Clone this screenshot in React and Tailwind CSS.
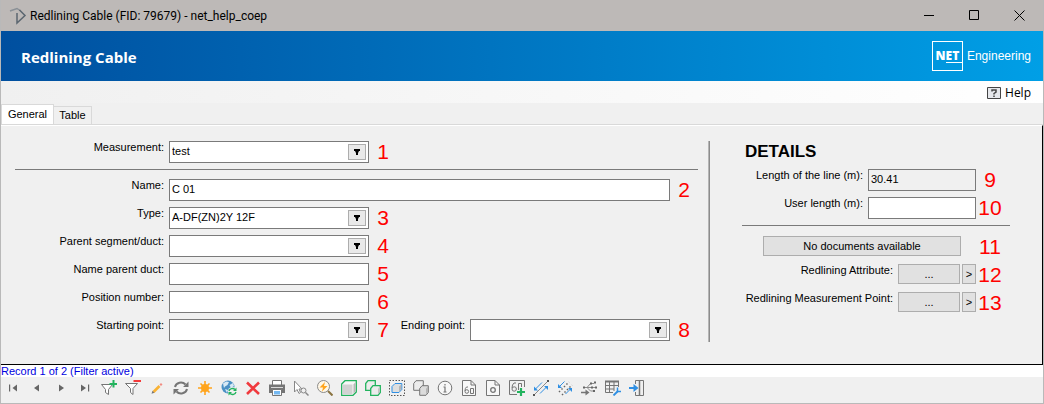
import React from "react";

const typeOptions = ["A-DF(ZN)2Y 12F"];

const Marker = ({ children }) => (
  <span className="w-7 shrink-0 text-center text-[21px] leading-[22px] text-[#ff0000]">
    {children}
  </span>
);

const Label = ({ htmlFor, className = "", children }) => (
  <label
    htmlFor={htmlFor}
    className={`shrink-0 whitespace-nowrap text-right leading-3 ${className}`}
  >
    {children}
  </label>
);

const TextField = ({ className = "", readOnly, ...props }) => (
  <input
    type="text"
    readOnly={readOnly}
    className={`h-[22px] min-w-0 border border-[#7a7a7a] px-0.5 pb-0.5 text-[11px] text-black outline-none ${
      readOnly ? "bg-[#f0f0f0]" : "bg-white"
    } ${className}`}
    {...props}
  />
);

const SelectField = ({ id, options = [""] }) => (
  <div className="relative h-[22px] w-[200px] shrink-0">
    <select
      id={id}
      className="h-full w-full appearance-none border border-[#7a7a7a] bg-white px-0.5 pb-0.5 text-[11px] text-black outline-none"
    >
      {options.map((option) => (
        <option key={option}>{option}</option>
      ))}
    </select>
    <span className="pointer-events-none absolute right-[3px] top-[3px] flex h-4 w-[18px] items-center justify-center border border-[#adadad] bg-[#e9e9e9]">
      <svg width="6" height="6" viewBox="0 0 6 6">
        <path d="M0 0H6V2H5L4 4V6H2V4L1 2H0Z" fill="#000" />
      </svg>
    </span>
  </div>
);

const PushButton = ({ className = "", ...props }) => (
  <button
    type="button"
    className={`h-5 shrink-0 border border-[#adadad] bg-[#e1e1e1] text-center leading-4 ${className}`}
    {...props}
  />
);

const GRAY = "#757575";
const BLUE = "#2f8fe3";
const GREEN = "#22b35e";

/* 16x16 drawings of the record toolbar, in order */
const tools = [
  {
    name: "First record",
    icon: (
      <g fill="#666">
        <path d="M4 4.500H5.200V11.500H4Z" />
        <path d="M12 4.500V11.500L7.500 8Z" />
      </g>
    ),
  },
  { name: "Previous record", icon: <path d="M10 4.500V11.500L5 8Z" fill="#666" /> },
  { name: "Next record", icon: <path d="M6 4.500V11.500L11 8Z" fill="#666" /> },
  {
    name: "Last record",
    icon: (
      <g fill="#666">
        <path d="M4 4.500V11.500L9 8Z" />
        <path d="M11 4.500H12.200V11.500H11Z" />
      </g>
    ),
  },
  {
    name: "Add filter",
    icon: (
      <>
        <path d="M.5 4.500H11.500L7.500 9.500V14.500L4.500 12.500V9.500Z" fill="#fff" stroke={GRAY} />
        <path d="M12.500 0V7.500M8.500 4H16" stroke={GREEN} strokeWidth="2" />
      </>
    ),
  },
  {
    name: "Remove filter",
    icon: (
      <>
        <path d="M.5 3.500H12.500L8 8.500V14.500L5.500 12.500V8.500Z" fill="#fff" stroke={GRAY} />
        <path d="M8.500 1H16" stroke="#f43b3b" strokeWidth="2" />
      </>
    ),
  },
  {
    name: "Edit",
    icon: (
      <>
        <path d="M4.500 12L10.500 6" stroke="#f9b233" strokeWidth="2.600" />
        <path d="M10.500 4.500L12 3L13.500 4.500L12 6Z" fill="#f28b82" />
        <path d="M3.500 10.800L5.500 12.800L2.500 13.800Z" fill="#777" />
      </>
    ),
  },
  {
    name: "Refresh",
    icon: (
      <>
        <path d="M2 7A6 5.500 0 0 1 12.500 4.500M14 9A6 5.500 0 0 1 3.500 11.500" fill="none" stroke={GRAY} strokeWidth="2" />
        <path d="M15.500 1.500V7H10ZM.5 14.500V9H6Z" fill={GRAY} />
      </>
    ),
  },
  {
    name: "New record",
    icon: (
      <>
        <path d="M8 1V15M1 8H15M3.500 3.500L12.500 12.500M12.500 3.500L3.500 12.500" stroke="#ffa41c" strokeWidth="1.600" />
        <circle cx="8" cy="8" r="4" fill="#ffa41c" />
      </>
    ),
  },
  {
    name: "Reload map",
    icon: (
      <>
        <circle cx="7" cy="7" r="6.500" fill="#4a90c4" />
        <path d="M2 3.500L5 1.500L8 2L6.500 5L4 6.500L3 8ZM8.500 5L12 3L13 6L10 8ZM4 9L7 10L6 13Z" fill="#d7e9f5" />
        <circle cx="11.500" cy="11.500" r="4.500" fill="#f0f0f0" />
        <path d="M8 11A3.500 3 0 0 1 14 9.500M15 12A3.500 3 0 0 1 9 13.500" fill="none" stroke={GREEN} strokeWidth="1.300" />
        <path d="M15.500 7.500V11H12ZM7.500 15.500V12H11Z" fill={GREEN} />
      </>
    ),
  },
  { name: "Delete", icon: <path d="M2 2.500L14 14M14 2.500L2 14" stroke="#f03a3e" strokeWidth="2.600" /> },
  {
    name: "Print",
    icon: (
      <>
        <path d="M3.500 5V.5H12.500V5" fill="#fff" stroke={GRAY} />
        <path d="M0 4.500H16V13H0Z" fill={GRAY} />
        <path d="M2 7.500H14" stroke="#d8d8d8" />
        <path d="M3.500 9.500H12.500V15.500H3.500Z" fill="#fff" stroke={GRAY} />
        <path d="M5 11H11V14.500H5Z" fill="#74b9f2" />
      </>
    ),
  },
  {
    name: "Select and zoom",
    icon: (
      <>
        <path d="M1.500 1V12L4 9.500L6 13.500L7.500 12.500L6 9H9Z" fill="#fff" stroke="#888" />
        <circle cx="10.500" cy="10.500" r="2.500" fill="#f0f0f0" stroke="#888" />
        <path d="M12.500 12.500L15.500 15.500" stroke="#888" strokeWidth="1.500" />
      </>
    ),
  },
  {
    name: "Flash zoom",
    icon: (
      <>
        <circle cx="6.500" cy="6.500" r="6" fill="#fff7e6" stroke="#8a8a8a" />
        <path d="M11 11L15.500 15.500" stroke="#8a7340" strokeWidth="2" />
        <path d="M8 2L2.500 7.500H6L5 11.500L10.500 6H7Z" fill="#ffa41c" />
      </>
    ),
  },
  {
    name: "Object",
    icon: (
      <>
        <path d="M.7 4L4 .7H15.300V12L12 15.300H.7Z" fill="#f7f7f7" stroke={GREEN} strokeWidth="1.300" />
        <path d="M1.500 4.500H11.500V14.500H1.500Z" fill="#d2d2d2" />
        <path d="M12.500 4.500L14.500 2V11.500L12.500 13.500Z" fill="#b8b8b8" />
      </>
    ),
  },
  {
    name: "Object copy",
    icon: (
      <>
        <path d="M.7 3.500L3 .7H10.300V7.500L8 10.300H.7Z" fill="#ececec" stroke={GREEN} strokeWidth="1.300" />
        <path d="M5.700 8.500L8 5.700H15.300V12.500L13 15.300H5.700Z" fill="#ececec" stroke={GREEN} strokeWidth="1.300" />
        <path d="M13 8.500L14.700 6.800V12L13 14Z" fill="#c4c4c4" />
      </>
    ),
  },
  {
    name: "Select object",
    icon: (
      <>
        <path d="M.5 .5H15.500V15.500H.5Z" fill="none" stroke="#555" strokeDasharray="1.500 1.500" />
        <path d="M3 6.500L6 3.500H12.800V9.500L10 12.500H3Z" fill="#dedede" stroke={BLUE} />
        <path d="M10 6.500L12.300 4.500V9L10 11.500Z" fill="#b5b5b5" />
      </>
    ),
  },
  {
    name: "Duplicate object",
    icon: (
      <>
        <path d="M.7 3.500L3 .7H10.300V7.500L8 10.300H.7Z" fill="#ececec" stroke={GRAY} />
        <path d="M6.700 8.500L9 5.700H15.300V12.500L13 15.300H6.700Z" fill="#dcdcdc" stroke={GRAY} />
        <path d="M13 8.500L15 6.500V12L13 14.500Z" fill="#b5b5b5" />
      </>
    ),
  },
  {
    name: "Information",
    icon: (
      <>
        <circle cx="8" cy="8" r="6.800" fill="#f7f7f7" stroke={GRAY} />
        <path d="M8 4V5.500M6.500 7H8V12M6.500 12H9.500" fill="none" stroke={GRAY} strokeWidth="1.200" />
      </>
    ),
  },
  {
    name: "Report",
    icon: (
      <>
        <path d="M1.500 .5H10L14.500 5V15.500H1.500Z" fill="#f7f7f7" stroke={GRAY} />
        <path d="M10 .5V5H14.500" fill="none" stroke={GRAY} />
        <path d="M7 7H5.500Q4 8 4 11" fill="none" stroke={GRAY} />
        <circle cx="5.800" cy="11.500" r="1.800" fill="none" stroke={GRAY} />
        <path d="M9.500 13.500V8.500H12.500V13.500Z" fill="none" stroke={GRAY} />
      </>
    ),
  },
  {
    name: "Document",
    icon: (
      <>
        <path d="M1.500 .5H10L14.500 5V15.500H1.500Z" fill="#f7f7f7" stroke={GRAY} />
        <path d="M10 .5V5H14.500" fill="none" stroke={GRAY} />
        <circle cx="8" cy="10" r="2.300" fill="none" stroke={GRAY} strokeWidth="1.300" />
      </>
    ),
  },
  {
    name: "Add report",
    icon: (
      <>
        <path d="M8 14.500H.5V.5H15.500V7" fill="none" stroke={GRAY} />
        <path d="M7 3H5Q3 4.500 3 8" fill="none" stroke={GRAY} />
        <circle cx="5.200" cy="9" r="2.200" fill="none" stroke={GRAY} />
        <path d="M9.500 10V3.500H12.500V7" fill="none" stroke={GRAY} />
        <path d="M12 8V16M8 12H16" stroke={GREEN} strokeWidth="2.200" />
      </>
    ),
  },
  {
    name: "Connect lines",
    icon: (
      <>
        <path d="M2 9.500L9 2.500M7 13.500L14 6.500" stroke={BLUE} />
        <path d="M1 6.500V10.500H5ZM11 6H15V10Z" fill={BLUE} />
        <path d="M2 14L14 2" stroke="#8a8a8a" />
        <path d="M0 14H2V16H0ZM14 0H16V2H14Z" fill="#555" />
      </>
    ),
  },
  {
    name: "Connect points",
    icon: (
      <>
        <path d="M2 7L7.500 1.500M8.500 14L14 8.500" stroke={BLUE} />
        <path d="M1 4V8H5ZM11 8H15V12Z" fill={BLUE} />
        <path d="M2 12L12 2M5 15L15 5" stroke="#666" strokeWidth="1.500" strokeDasharray="1.500 2" />
      </>
    ),
  },
  {
    name: "Trace",
    icon: (
      <>
        <path d="M3 7.500H15M6 7.500L9.500 3.500H13M6 7.500L9.500 11H13" fill="none" stroke="#8a8a8a" />
        <path d="M2 6.500H4V8.500H2ZM9 2.500H11V4.500H9ZM13 1.500H15V3.500H13ZM10 6.500H12V8.500H10ZM14 6.500H16V8.500H14ZM12 10H14V12H12Z" fill="#666" />
        <path d="M0 12.500H5" stroke={GRAY} strokeWidth="1.500" />
        <path d="M4.500 9.500L8.500 12.500L4.500 15.500Z" fill={GRAY} />
      </>
    ),
  },
  {
    name: "Table settings",
    icon: (
      <>
        <path d="M.5 1V12.500H8M13.500 1V7" fill="none" stroke={GRAY} />
        <path d="M0 1.500H14" stroke={GRAY} strokeWidth="2" />
        <path d="M1 5.500H13M1 9H9M4.500 2V12M9 2V11" stroke={GRAY} />
        <path d="M8.500 15.500L13 11" stroke={BLUE} strokeWidth="1.800" />
        <path d="M12.500 7.500V11.500H16" fill="none" stroke={BLUE} strokeWidth="1.500" />
      </>
    ),
  },
  {
    name: "Exit",
    icon: (
      <>
        <path d="M6.500 4V.5H14.500V15.500H6.500V12" fill="none" stroke={GRAY} />
        <path d="M10.500 1V15" stroke={GRAY} strokeWidth="1.500" />
        <path d="M0 8H5" stroke={BLUE} strokeWidth="2" />
        <path d="M4.500 4V12L9.500 8Z" fill={BLUE} />
      </>
    ),
  },
];

const TitleBar = () => (
  <div className="flex h-[31px] items-center bg-[#bdb9b7] pl-2 pr-px font-[Roboto,sans-serif] text-xs text-black">
    <svg width="18" height="18" viewBox="0 0 18 18" fill="none" stroke="#5b6670" strokeWidth="1.500">
      <path d="M1 4L8 1.500L11 3.500" stroke="#8a9096" />
      <path d="M8 6V16L16 8.500L10.500 3" />
    </svg>
    <span className="ml-[3px] flex-1 whitespace-nowrap">
      Redlining Cable (FID: 79679) - net_help_coep
    </span>
    <button type="button" aria-label="Minimize" className="flex h-full w-[45px] items-center justify-center">
      <svg width="11" height="11" viewBox="0 0 11 11">
        <path d="M0 5.500H10" stroke="#000" />
      </svg>
    </button>
    <button type="button" aria-label="Maximize" className="flex h-full w-[45px] items-center justify-center">
      <svg width="11" height="11" viewBox="0 0 11 11">
        <path d="M.5 .5H9.500V9.500H.5Z" fill="none" stroke="#000" />
      </svg>
    </button>
    <button type="button" aria-label="Close" className="flex h-full w-[45px] items-center justify-center">
      <svg width="11" height="11" viewBox="0 0 11 11">
        <path d="M.5 .5L10.500 10.500M10.500 .5L.5 10.500" stroke="#000" />
      </svg>
    </button>
  </div>
);

const Banner = () => (
  <div className="flex h-[50px] items-center justify-between bg-linear-to-r from-[#004f9f] to-[#009fe6] pl-5 pr-3 text-white">
    <h1 className="pt-0.5 font-['Open_Sans',sans-serif] text-[15px] font-bold">Redlining Cable</h1>
    <div className="flex items-center gap-1">
      <div className="flex h-[30px] w-[31px] flex-col items-center justify-center border border-white">
        <span className="font-['Open_Sans',sans-serif] text-xs font-extrabold leading-3">NET</span>
        <span className="h-px w-4 self-end bg-white" />
      </div>
      <span className="text-xs">Engineering</span>
    </div>
  </div>
);

const GeneralForm = () => (
  <section className="flex min-w-0 flex-1 flex-col">
    <div className="flex">
      <Label htmlFor="measurement" className="mr-[5px] w-[149px]">Measurement:</Label>
      <SelectField id="measurement" options={["test"]} />
      <Marker>1</Marker>
    </div>
    <hr className="mb-[9px] mt-1.5 border-[#7a7a7a]" />
    <div className="flex flex-col gap-1.5">
      <div className="flex">
        <Label htmlFor="name" className="mr-[5px] w-[149px]">Name:</Label>
        <TextField id="name" defaultValue="C 01" className="flex-1" />
        <Marker>2</Marker>
      </div>
      <div className="flex">
        <Label htmlFor="type" className="mr-[5px] w-[149px]">Type:</Label>
        <SelectField id="type" options={typeOptions} />
        <Marker>3</Marker>
      </div>
      <div className="flex">
        <Label htmlFor="parent" className="mr-[5px] w-[149px]">Parent segment/duct:</Label>
        <SelectField id="parent" />
        <Marker>4</Marker>
      </div>
      <div className="flex">
        <Label htmlFor="parentName" className="mr-[5px] w-[149px]">Name parent duct:</Label>
        <TextField id="parentName" className="w-[200px]" />
        <Marker>5</Marker>
      </div>
      <div className="flex">
        <Label htmlFor="position" className="mr-[5px] w-[149px]">Position number:</Label>
        <TextField id="position" className="w-[200px]" />
        <Marker>6</Marker>
      </div>
      <div className="flex">
        <Label htmlFor="start" className="mr-[5px] w-[149px]">Starting point:</Label>
        <SelectField id="start" />
        <Marker>7</Marker>
        <Label htmlFor="end" className="ml-auto mr-[5px]">Ending point:</Label>
        <SelectField id="end" />
        <Marker>8</Marker>
      </div>
    </div>
  </section>
);

const Details = () => (
  <section className="flex w-[268px] shrink-0 flex-col">
    <h2 className="mb-1.5 ml-[3px] text-[17px] font-bold leading-[22px]">DETAILS</h2>
    <div className="flex flex-col gap-1.5 pr-1.5">
      <div className="flex justify-end">
        <Label htmlFor="length" className="mr-[5px]">Length of the line (m):</Label>
        <TextField id="length" defaultValue="30.41" readOnly className="w-[108px]" />
        <Marker>9</Marker>
      </div>
      <div className="flex justify-end">
        <Label htmlFor="userLength" className="mr-[5px]">User length (m):</Label>
        <TextField id="userLength" className="w-[108px]" />
        <Marker>10</Marker>
      </div>
    </div>
    <hr className="mb-2.5 mt-1.5 border-[#7a7a7a]" />
    <div className="flex flex-col gap-2 pr-1.5">
      <div className="flex h-5 items-start">
        <PushButton className="ml-[21px] mr-auto w-[198px]">No documents available</PushButton>
        <Marker>11</Marker>
      </div>
      <div className="flex h-5 items-start justify-end">
        <Label htmlFor="attribute" className="mr-[5px]">Redlining Attribute:</Label>
        <PushButton id="attribute" className="mr-0.5 w-[62px]">...</PushButton>
        <PushButton aria-label="Open redlining attribute" className="w-3.5">&gt;</PushButton>
        <Marker>12</Marker>
      </div>
      <div className="flex h-5 items-start justify-end">
        <Label htmlFor="point" className="mr-[5px]">Redlining Measurement Point:</Label>
        <PushButton id="point" className="mr-0.5 w-[62px]">...</PushButton>
        <PushButton aria-label="Open redlining measurement point" className="w-3.5">&gt;</PushButton>
        <Marker>13</Marker>
      </div>
    </div>
  </section>
);

const App = () => (
  <div className="flex min-h-screen flex-col border-x border-b border-[#b9b9b9] bg-[#f0f0f0] font-['Liberation_Sans',Arial,sans-serif] text-[11px] text-black">
    <TitleBar />
    <Banner />

    {/* Help */}
    <div className="flex h-[22px] items-center justify-end bg-linear-to-r from-[#f0f0f0] to-white pr-3">
      <button type="button" className="flex items-center gap-1 pt-0.5 font-['Open_Sans',sans-serif] text-xs">
        <svg width="14" height="12" viewBox="0 0 14 12">
          <path d="M.5 .5H13.500V11.500H.5Z" fill="#e6e8ec" stroke="#444" />
          <path d="M5 4.500V3H9V5L7 6.500V7.500M7 8.500V10" fill="none" stroke="#444" strokeWidth="1.500" />
        </svg>
        Help
      </button>
    </div>

    {/* Tabs */}
    <div role="tablist" className="flex h-[21px] items-end pt-px">
      <button type="button" role="tab" aria-selected="true" className="h-full w-[53px] border border-b-0 border-[#d9d9d9] bg-white">
        General
      </button>
      <button type="button" role="tab" aria-selected="false" className="h-[18px] w-[38px] border border-b-0 border-l-0 border-[#d9d9d9]">
        Table
      </button>
    </div>

    <div className="flex flex-1 flex-col border-t border-[#d9d9d9]">
      <div className="flex flex-1 border-b border-r border-t border-b-black border-r-black border-t-white pb-5 pl-3.5 pr-8 pt-[15px]">
        <GeneralForm />
        <div className="ml-2.5 mr-8 h-[201px] w-0.5 border-l border-r border-l-[#b5b5b5] border-r-[#8c8c8c]" />
        <Details />
      </div>
    </div>

    <p className="bg-white leading-3 text-[#0000e0]">Record 1 of 2 (Filter active)</p>
    <div role="toolbar" className="flex h-[26px] items-center">
      {tools.map((tool) => (
        <button key={tool.name} type="button" aria-label={tool.name} title={tool.name} className="flex h-full w-6 items-start justify-center pt-[3px]">
          <svg width="16" height="16" viewBox="0 0 16 16">
            {tool.icon}
          </svg>
        </button>
      ))}
    </div>
  </div>
);

export default App;
